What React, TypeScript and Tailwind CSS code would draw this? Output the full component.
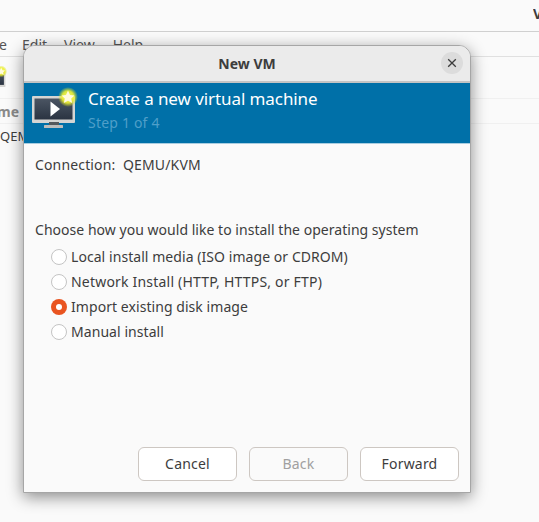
const font = { fontFamily: '"Noto Sans", sans-serif' };

function VmIcon({ small }: { small?: boolean }) {
  return (
    <svg width="48" height="42" viewBox="0 0 48 42" className={small ? "" : "shrink-0"}>
      <defs>
        <linearGradient id="scr" x1="0" y1="0" x2="0" y2="1">
          <stop offset="0" stopColor="#4b5563" />
          <stop offset="1" stopColor="#2b3442" />
        </linearGradient>
        <radialGradient id="glow">
          <stop offset="0" stopColor="#ffff70" stopOpacity="1" />
          <stop offset="0.6" stopColor="#eef030" stopOpacity="0.9" />
          <stop offset="1" stopColor="#d8e020" stopOpacity="0" />
        </radialGradient>
      </defs>
      <rect x="0" y="9" width="43" height="27" rx="1" fill="#d5d5d3" />
      <rect x="2.5" y="11.5" width="38" height="21" fill="url(#scr)" />
      <path d="M18.5 14.5 L28 22 L18.5 29.5 Z" fill="#ffffff" />
      <rect x="17" y="35" width="10" height="3" fill="#55595c" />
      <rect x="12" y="38" width="19" height="3" rx="0.5" fill="#bdbdbb" />
      <circle cx="36" cy="10" r="10" fill="url(#glow)" />
      <path d="M36 3.5 L38 8 L42.5 8.5 L39.2 11.6 L40.2 16 L36 13.7 L31.8 16 L32.8 11.6 L29.5 8.5 L34 8 Z" fill="#fffbe0" />
    </svg>
  );
}

function Radio({ label, on, wide }: { label: string; on?: boolean; wide?: boolean }) {
  return (
    <div className="flex items-center h-[25px] pl-[16px]">
      {on ? (
        <span className="w-[16px] h-[16px] rounded-full bg-[#e95420] flex items-center justify-center">
          <span className="w-[6px] h-[6px] rounded-full bg-white" />
        </span>
      ) : (
        <span className="w-[16px] h-[16px] rounded-full bg-white border border-[#c4c4c4]" />
      )}
      <span className={"ml-[4px] text-[14px] text-[#3d3d3d] " + (wide ? "tracking-[0.2px]" : "tracking-[0.06px]")}>{label}</span>
    </div>
  );
}

function Btn({ label, off }: { label: string; off?: boolean }) {
  return (
    <div
      className={
        "w-[99px] h-[34px] pb-[2px] rounded-[6px] border border-[#cdc7c2] flex items-center justify-center text-[14px] tracking-[0.2px] " +
        (off ? "bg-[#fafafa] text-[#a0a0a0]" : "bg-white text-[#3d3d3d]")
      }
    >
      {label}
    </div>
  );
}

export default function App() {
  return (
    <div className="relative w-[539px] h-[522px] overflow-hidden bg-[#fafafa]" style={font}>
      <div className="h-[31px] border-b border-[#d0d0d0] box-content flex justify-end">
        <span className="text-[14px] font-bold text-[#3d3d3d] mt-[3px] mr-[-2px] w-[8px] overflow-hidden">V</span>
      </div>
      <div className="h-[25px] border-b border-[#e0e0e0] flex items-center text-[14px] text-[#555555]">
        <span className="w-[7px] overflow-hidden flex justify-end">e</span>
        <span className="ml-[15px]">Edit</span>
        <span className="ml-[17px]">View</span>
        <span className="ml-[18px]">Help</span>
      </div>
      <div className="h-[42px] border-b border-[#f0f0f0] flex items-center overflow-hidden">
        <div className="ml-[-30px] scale-[0.6]"><VmIcon small /></div>
      </div>
      <div className="h-[25px] border-b border-[#f0f0f0] flex items-center">
        <span className="text-[14px] font-bold text-[#8a8a8a] w-[19px] overflow-hidden flex justify-end">me</span>
      </div>
      <div className="h-[26px] flex items-center">
        <span className="text-[13px] text-[#3d3d3d]">QEM</span>
      </div>

      <div className="absolute left-[23px] top-[45px] w-[448px] h-[448px] rounded-t-[12px] bg-[#fafafa] border border-[#a6a6a6] flex flex-col shadow-[0_4px_16px_rgba(0,0,0,0.45)]">
        <div className="relative h-[37px] shrink-0 rounded-t-[11px] bg-[#ebebeb] border-b-2 border-[#c4c4c4] flex items-center justify-center">
          <span className="text-[14px] font-bold text-[#3d3d3d]">New VM</span>
          <span className="absolute right-[7px] top-[6px] w-[22px] h-[22px] rounded-full bg-[#dcdcdc] flex items-center justify-center">
            <svg width="10" height="10" viewBox="0 0 10 10">
              <path d="M1.2 1.2 L8.8 8.8 M8.8 1.2 L1.2 8.8" stroke="#3d3d3d" strokeWidth="1.3" />
            </svg>
          </span>
        </div>
        <div className="h-[61px] shrink-0 bg-[#0070a8] border-b border-[#a9cde0] flex items-start pl-[8px] pt-[4px]">
          <VmIcon />
          <div className="ml-[8px] flex flex-col">
            <span className="text-[17px] leading-[24px] text-white tracking-[-0.08px]">Create a new virtual machine</span>
            <span className="text-[14px] leading-[22px] mt-[1px] tracking-[0.2px] text-[#4f9fc9]">Step 1 of 4</span>
          </div>
        </div>
        <div className="flex-1 flex flex-col px-[11px] pt-[11px] text-[14px] tracking-[0.03px] text-[#3d3d3d]">
          <div className="leading-[19px] whitespace-pre tracking-[0.15px]">Connection:  QEMU/KVM</div>
          <div className="mt-[46px] leading-[19px]">Choose how you would like to install the operating system</div>
          <div className="mt-[5px] flex flex-col">
            <Radio label="Local install media (ISO image or CDROM)" />
            <Radio label="Network Install (HTTP, HTTPS, or FTP)" wide />
            <Radio label="Import existing disk image" on />
            <Radio label="Manual install" />
          </div>
          <div className="mt-auto mb-[11px] flex justify-end gap-[12px]">
            <Btn label="Cancel" />
            <Btn label="Back" off />
            <Btn label="Forward" />
          </div>
        </div>
      </div>
    </div>
  );
}
